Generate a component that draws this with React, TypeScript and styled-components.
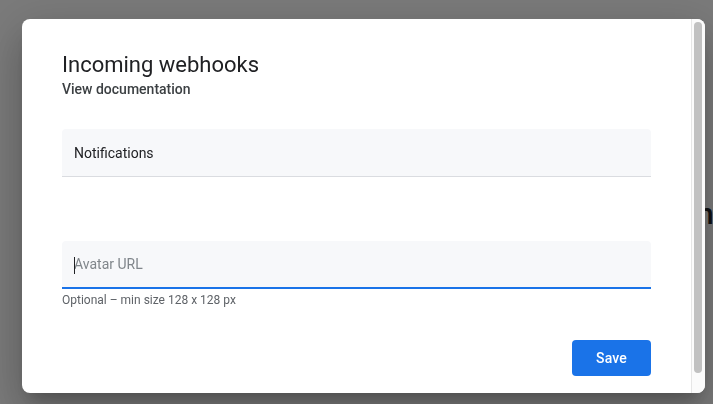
import React from 'react';
import styled, { createGlobalStyle } from 'styled-components';

const GlobalStyle = createGlobalStyle`
	html, body {
		margin: 0;
		padding: 0;
		width: 100%;
		height: 100%;
		overflow: hidden;
		background: #ffffff;
		font-family: Roboto, 'Noto Sans', Arial, sans-serif;
	}
`;

const App = (): JSX.Element => {
	return (
		<>
			<GlobalStyle />
			<StyledPage>
				<span className='behind'>ns</span>
			</StyledPage>
			<Overlay>
				<Dialog>
					<Content>
						<Title>Incoming webhooks</Title>
						<DocLink href='#'>View documentation</DocLink>

						<Field $gap={30}>
							<FieldText>Notifications</FieldText>
						</Field>

						<Field $gap={64} $focused>
							<Caret />
							<Input placeholder='Avatar URL' />
						</Field>
						<Helper>Optional – min size 128 x 128 px</Helper>

						<Actions>
							<SaveButton>Save</SaveButton>
						</Actions>
					</Content>
					<ScrollTrack>
						<ScrollThumb />
					</ScrollTrack>
				</Dialog>
			</Overlay>
		</>
	);
};

const StyledPage = styled.div`
	position: relative;
	width: 713px;
	height: 404px;

	.behind {
		position: absolute;
		left: 697px;
		top: 199px;
		font-size: 30px;
		line-height: 30px;
		font-weight: 500;
		color: #202124;
		white-space: nowrap;
	}
`;

const Overlay = styled.div`
	position: fixed;
	inset: 0;
	background: rgba(0, 0, 0, 0.52);
	display: flex;
	align-items: flex-start;
	padding: 19px 0 0 22px;
	box-sizing: border-box;
`;

const Dialog = styled.div`
	width: 683px;
	height: 374px;
	display: flex;
	background: #ffffff;
	border-radius: 8px;
	overflow: hidden;
	box-shadow:
		0 11px 15px -7px rgba(0, 0, 0, 0.2),
		0 24px 38px 3px rgba(0, 0, 0, 0.14),
		0 9px 46px 8px rgba(0, 0, 0, 0.12);
`;

const Content = styled.div`
	flex: 1;
	padding: 32px 40px 40px;
	display: flex;
	flex-direction: column;

	& > * {
		flex-shrink: 0;
	}
`;

const ScrollTrack = styled.div`
	width: 14px;
	box-sizing: border-box;
	display: flex;
	padding: 3px 3px 20px 2px;
	background: #fbfbfb;
	border-left: 1px solid #e6e6e6;
`;

const ScrollThumb = styled.div`
	flex: 1;
	background: #c1c1c1;
	border-radius: 4px;
`;

const Title = styled.h2`
	margin: 0;
	font-size: 22px;
	line-height: 28px;
	font-weight: 400;
	color: #202124;
`;

const DocLink = styled.a`
	font-size: 14px;
	line-height: 20px;
	font-weight: 500;
	color: #3c4043;
	text-decoration: none;
	align-self: flex-start;
`;

const Field = styled.div<{ $gap: number; $focused?: boolean }>`
	position: relative;
	margin-top: ${(p) => p.$gap}px;
	height: 48px;
	box-sizing: border-box;
	display: flex;
	align-items: center;
	padding: 0 12px;
	background: #f7f8fa;
	border-radius: 4px 4px 0 0;
	border-bottom: ${(p) => (p.$focused ? '2px solid #1a73e8' : '1px solid #dadce0')};
`;

const FieldText = styled.span`
	font-size: 14px;
	color: #202124;
`;

const Input = styled.input`
	flex: 1;
	border: none;
	outline: none;
	background: transparent;
	padding: 0;
	font-family: inherit;
	font-size: 14px;
	color: #202124;
	caret-color: transparent;

	&::placeholder {
		color: #80868b;
	}
`;

const Caret = styled.span`
	position: absolute;
	left: 12px;
	top: 16px;
	width: 1px;
	height: 17px;
	background: #202124;
`;

const Helper = styled.div`
	margin-top: 3px;
	font-size: 12px;
	line-height: 16px;
	color: #5f6368;
`;

const Actions = styled.div`
	display: flex;
	justify-content: flex-end;
	margin-top: 32px;
`;

const SaveButton = styled.button`
	width: 79px;
	height: 36px;
	border: none;
	border-radius: 4px;
	background: #1a73e8;
	color: #ffffff;
	font-family: inherit;
	font-size: 14px;
	font-weight: 500;
	letter-spacing: 0.2px;
	cursor: pointer;
`;

export default App;
